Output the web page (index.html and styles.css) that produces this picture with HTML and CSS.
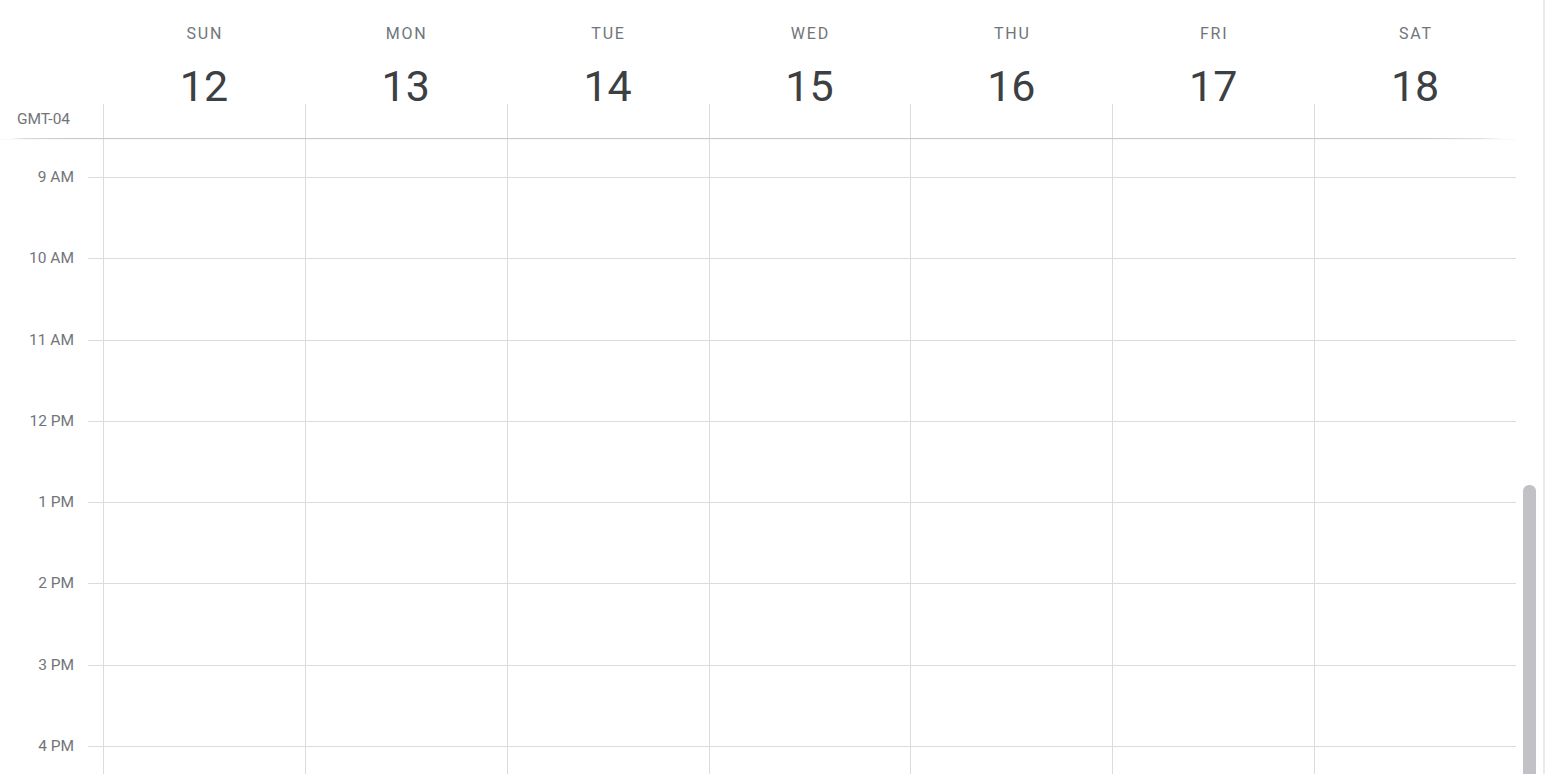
FILE: index.html
```html
<!DOCTYPE html>
<html lang="en">
<head>
<meta charset="utf-8">
<title>Week</title>
<link rel="stylesheet" href="styles.css">
</head>
<body>
<div class="page">
  <div class="cal">
    <div class="head">
      <div class="gutter"></div>
      <div class="day"><span class="dname">SUN</span><span class="dnum">12</span></div>
      <div class="day"><span class="dname">MON</span><span class="dnum">13</span></div>
      <div class="day"><span class="dname">TUE</span><span class="dnum">14</span></div>
      <div class="day"><span class="dname">WED</span><span class="dnum">15</span></div>
      <div class="day"><span class="dname">THU</span><span class="dnum">16</span></div>
      <div class="day"><span class="dname">FRI</span><span class="dnum">17</span></div>
      <div class="day"><span class="dname">SAT</span><span class="dnum">18</span></div>
    </div>
    <div class="allday">
      <div class="tz">GMT-04</div>
      <div class="cell"></div><div class="cell"></div><div class="cell"></div><div class="cell"></div><div class="cell"></div><div class="cell"></div><div class="cell"></div>
    </div>
    <div class="sep"></div>
    <div class="body">
      <div class="row first">
        <div class="lbl"></div><div class="tick none"></div>
        <div class="cell"></div><div class="cell"></div><div class="cell"></div><div class="cell"></div><div class="cell"></div><div class="cell"></div><div class="cell"></div>
      </div>
      <div class="row">
        <div class="lbl">9 AM</div><div class="tick"></div>
        <div class="cell"></div><div class="cell"></div><div class="cell"></div><div class="cell"></div><div class="cell"></div><div class="cell"></div><div class="cell"></div>
      </div>
      <div class="row">
        <div class="lbl">10 AM</div><div class="tick"></div>
        <div class="cell"></div><div class="cell"></div><div class="cell"></div><div class="cell"></div><div class="cell"></div><div class="cell"></div><div class="cell"></div>
      </div>
      <div class="row">
        <div class="lbl">11 AM</div><div class="tick"></div>
        <div class="cell"></div><div class="cell"></div><div class="cell"></div><div class="cell"></div><div class="cell"></div><div class="cell"></div><div class="cell"></div>
      </div>
      <div class="row">
        <div class="lbl">12 PM</div><div class="tick"></div>
        <div class="cell"></div><div class="cell"></div><div class="cell"></div><div class="cell"></div><div class="cell"></div><div class="cell"></div><div class="cell"></div>
      </div>
      <div class="row">
        <div class="lbl">1 PM</div><div class="tick"></div>
        <div class="cell"></div><div class="cell"></div><div class="cell"></div><div class="cell"></div><div class="cell"></div><div class="cell"></div><div class="cell"></div>
      </div>
      <div class="row">
        <div class="lbl">2 PM</div><div class="tick"></div>
        <div class="cell"></div><div class="cell"></div><div class="cell"></div><div class="cell"></div><div class="cell"></div><div class="cell"></div><div class="cell"></div>
      </div>
      <div class="row">
        <div class="lbl">3 PM</div><div class="tick"></div>
        <div class="cell"></div><div class="cell"></div><div class="cell"></div><div class="cell"></div><div class="cell"></div><div class="cell"></div><div class="cell"></div>
      </div>
      <div class="row">
        <div class="lbl">4 PM</div><div class="tick"></div>
        <div class="cell"></div><div class="cell"></div><div class="cell"></div><div class="cell"></div><div class="cell"></div><div class="cell"></div><div class="cell"></div>
      </div>
    </div>
  </div>
  <div class="scrollarea">
    <div class="thumb"></div>
  </div>
</div>
</body>
</html>
```
FILE: styles.css
```css
html, body {
  margin: 0;
  padding: 0;
  background: #ffffff;
}
body {
  font-family: Roboto, "Liberation Sans", Arial, sans-serif;
  overflow: hidden;
}
.page {
  display: flex;
  width: 1548px;
  height: 774px;
  overflow: hidden;
}
.cal {
  width: 1516px;
  display: flex;
  flex-direction: column;
  flex: none;
}
.head, .allday, .row {
  display: grid;
  grid-template-columns: 88px 15px repeat(7, 1fr);
}
.head {
  height: 104px;
}
.head .gutter {
  grid-column: 1 / span 2;
}
.day {
  display: flex;
  flex-direction: column;
  align-items: center;
}
.dname {
  margin-top: 24px;
  height: 20px;
  line-height: 20px;
  font-size: 16px;
  letter-spacing: 1.8px;
  padding-left: 1.8px;
  color: #70757a;
  font-weight: 400;
}
.dnum {
  margin-top: 17px;
  height: 50px;
  line-height: 50px;
  font-size: 43px;
  color: #3c4043;
  font-weight: 400;
}
.allday {
  height: 34px;
}
.tz {
  grid-column: 1 / span 2;
  padding-left: 17px;
  padding-top: 6px;
  font-size: 15.5px;
  line-height: 18px;
  color: #70757a;
}
.cell {
  border-left: 1px solid #dadce0;
}
.sep {
  height: 1px;
  background: linear-gradient(to right, rgba(200,200,200,0) 10px, rgba(200,200,200,0.7) 25px, #c8c8c8 70px, #c8c8c8 1420px, rgba(200,200,200,0.6) 1480px, rgba(200,200,200,0) 1505px);
  box-shadow: 0 1px 1px rgba(0,0,0,0.03);
}
.body {
  flex: 1;
  overflow: hidden;
}
.row {
  height: 81.3px;
}
.row.first {
  height: 38px;
}
.row .cell, .row .tick {
  border-top: 1px solid #dadce0;
}
.row.first .cell, .row.first .tick {
  border-top: none;
}
.lbl {
  margin-top: -9px;
  height: 18px;
  line-height: 18px;
  padding-right: 14px;
  text-align: right;
  font-size: 15.5px;
  color: #70757a;
}
.scrollarea {
  flex: none;
  width: 27px;
  height: 774px;
  border-right: 2px solid #e8eaed;
}
.thumb {
  margin-top: 485px;
  margin-left: 7px;
  width: 13px;
  height: 320px;
  border-radius: 6px 6px 0 0;
  background: #c1c1c6;
}
```
